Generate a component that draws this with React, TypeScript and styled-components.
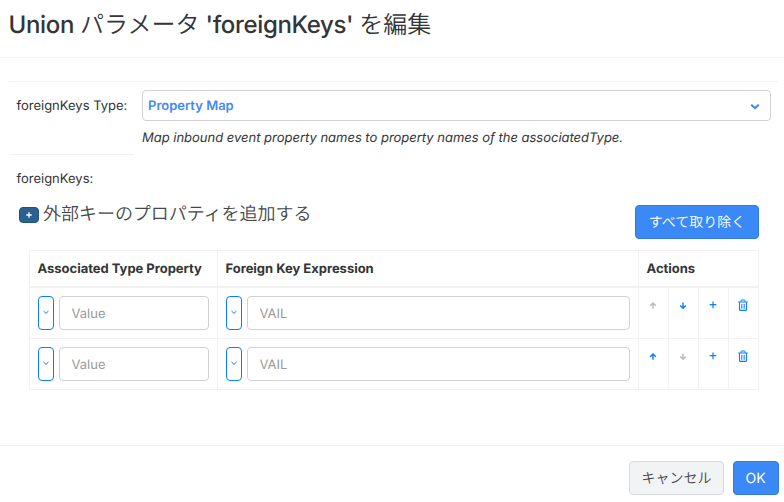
import React from "react";
import styled, { createGlobalStyle } from "styled-components";

const GlobalStyle = createGlobalStyle`
  *, *::before, *::after { box-sizing: border-box; }
  body {
    margin: 0;
    background: #fff;
    color: #333537;
    font-family: Inter, "Noto Sans CJK JP", sans-serif;
    font-size: 13px;
    line-height: 20px;
    text-rendering: geometricPrecision;
  }
  button, input { font: inherit; text-rendering: inherit; }
`;

const LINE = "#f2f2f3";
const BLUE = "#0a7cff";

const Dialog = styled.div`
  display: flex;
  flex-direction: column;
  height: 502px;
  overflow: hidden;
`;

const Header = styled.header`
  height: 58px;
  padding: 7px 9px 0 8.5px;
  border-bottom: 1px solid ${LINE};
`;

const Title = styled.h1`
  margin: 0;
  font-size: 24px;
  line-height: 36px;
  font-weight: 500;
  letter-spacing: -0.33px;
  white-space: nowrap;
`;

const Ja = styled.span<{ $size?: number; $spacing?: number }>`
  font-family: "Noto Sans CJK JP", sans-serif;
  font-weight: 350;
  font-size: ${(p) => (p.$size ? `${p.$size}px` : "inherit")};
  letter-spacing: ${(p) => p.$spacing ?? 0}px;
  line-height: 1;
`;

const Body = styled.main`
  flex: 1;
  padding: 23px 5px 0 9px;
`;

const TypeRow = styled.section`
  display: grid;
  grid-template-columns: 125px 1fr;
  height: 74px;
  border-top: 1px solid ${LINE};
`;

const LabelCell = styled.div`
  padding: 14px 0 0 7.5px;
  white-space: nowrap;
  border-bottom: 1px solid ${LINE};
`;

const FieldCell = styled.div`
  padding: 8px 8px 0;
`;

const Select = styled.button`
  display: flex;
  align-items: center;
  justify-content: space-between;
  width: 629px;
  height: 31px;
  padding: 1px 10px 0 5px;
  border: 1px solid #cfd0da;
  border-radius: 4px;
  background: #fff;
  color: #3f8af5;
  font-weight: 600;
`;

const Help = styled.p`
  margin: 7px 0 0;
  font-style: italic;
  letter-spacing: -0.015px;
  white-space: nowrap;
`;

const KeysLabel = styled.div`
  padding: 14px 0 0 7.5px;
  height: 33px;
`;

const Toolbar = styled.div`
  display: flex;
  justify-content: space-between;
  align-items: flex-start;
  height: 62px;
  padding: 17px 20px 0 10px;
`;

const AddGroup = styled.div`
  display: flex;
  align-items: flex-start;
  gap: 4px;
`;

const AddButton = styled.button`
  display: flex;
  align-items: center;
  justify-content: center;
  width: 20px;
  height: 16px;
  margin-top: 2px;
  padding: 0 1px 0 0;
  border: 1px solid #1f527d;
  border-radius: 4px;
  background: #2b6192;
  color: #fff;
`;

const AddText = styled.div`
  height: 20px;
  margin-top: -1px;
  color: #45474a;
  line-height: 20px;
  white-space: nowrap;
`;

const Button = styled.button<{ $width: number; $primary?: boolean }>`
  display: flex;
  align-items: center;
  justify-content: center;
  width: ${(p) => p.$width}px;
  height: 34px;
  padding: 0 0 1px;
  border: 1px solid ${(p) => (p.$primary ? "#317bdc" : "#d9dadc")};
  border-radius: 4px;
  background: ${(p) => (p.$primary ? "#3b89f6" : "#f2f3f5")};
  color: ${(p) => (p.$primary ? "#fff" : "#45474a")};
  font-size: 14px;
  white-space: nowrap;
`;

const OkButton = styled(Button)`
  padding: 1px 1px 0 0;
`;

const Table = styled.div`
  width: 730px;
  margin-left: 20px;
  border: solid ${LINE};
  border-width: 1px 1px 0 0;
`;

const HeadRow = styled.div`
  display: grid;
  grid-template-columns: 188px 421px 1fr;
  height: 37px;
`;

const HeadCell = styled.div`
  padding: 8px 7.5px 0;
  border-left: 1px solid ${LINE};
  border-bottom: 2px solid ${LINE};
  font-weight: 700;
  letter-spacing: -0.02px;
  white-space: nowrap;
`;

const Row = styled.div`
  display: grid;
  grid-template-columns: 188px 421px repeat(4, 30px);
  height: 51px;
`;

const Cell = styled.div`
  display: flex;
  gap: 5px;
  padding: 8px 8px 0;
  border-left: 1px solid ${LINE};
  border-bottom: 1px solid ${LINE};
`;

const ActionCell = styled(Cell)`
  padding: 11px 0 0 7px;
`;

const PickButton = styled.button`
  display: flex;
  align-items: center;
  justify-content: center;
  flex: none;
  width: 16px;
  height: 34px;
  padding: 0 1px 0 0;
  border: 1px solid ${BLUE};
  border-radius: 4px;
  background: #fff;
  color: ${BLUE};
`;

const Input = styled.input`
  flex: 1;
  min-width: 0;
  height: 34px;
  padding: 2px 11.5px 0;
  border: 1px solid #cfd0d8;
  border-radius: 4px;
  background: #fff;
  &::placeholder { color: #999; opacity: 1; }
`;

const IconButton = styled.button`
  display: flex;
  width: 14px;
  height: 14px;
  padding: 0;
  border: 0;
  background: none;
  color: ${BLUE};
  &:disabled { color: #b9bac1; }
`;

const Footer = styled.footer`
  display: flex;
  justify-content: flex-end;
  gap: 9px;
  height: 57px;
  padding: 15px 5px 0;
  border-top: 1px solid ${LINE};
`;

const Stroke = ({ d, size = 14, width = 1.4 }: { d: string; size?: number; width?: number }) => (
  <svg width={size} height={size} viewBox={`0 0 ${size} ${size}`} fill="none" stroke="currentColor" strokeWidth={width}>
    <path d={d} />
  </svg>
);

const Trash = () => (
  <svg width="14" height="14" viewBox="0 0 14 14" fill="none" stroke="currentColor">
    <path d="M2.2 3H11.8M5 2.8V1.4Q5 1 5.4 1H8.6Q9 1 9 1.4V2.8" />
    <path d="M3.5 3.3V10.4Q3.5 11.4 4.5 11.4H9.5Q10.5 11.4 10.5 10.4V3.3" strokeWidth="1.1" />
    <path d="M5.5 5V9.8M7 5V9.8M8.5 5V9.8" strokeWidth="0.7" />
  </svg>
);

const ARROW_UP = "M7 9.7V4.5M4.2 6.8L7 4L9.8 6.8";
const ARROW_DOWN = "M7 3.5V8.7M4.2 6.4L7 9.2L9.8 6.4";
const PLUS = "M7 2.5V9.2M3.7 5.7H10.3";
const SMALL_CHEVRON = "M2.5 3L5 5.4L7.5 3";

const KeyRow = ({ first }: { first: boolean }) => (
  <Row>
    <Cell>
      <PickButton aria-label="Choose value"><Stroke d={SMALL_CHEVRON} size={10} width={1} /></PickButton>
      <Input placeholder="Value" />
    </Cell>
    <Cell>
      <PickButton aria-label="Choose expression"><Stroke d={SMALL_CHEVRON} size={10} width={1} /></PickButton>
      <Input placeholder="VAIL" />
    </Cell>
    <ActionCell><IconButton aria-label="Move up" disabled={first}><Stroke d={ARROW_UP} /></IconButton></ActionCell>
    <ActionCell><IconButton aria-label="Move down" disabled={!first}><Stroke d={ARROW_DOWN} /></IconButton></ActionCell>
    <ActionCell><IconButton aria-label="Add"><Stroke d={PLUS} width={1.2} /></IconButton></ActionCell>
    <ActionCell><IconButton aria-label="Delete"><Trash /></IconButton></ActionCell>
  </Row>
);

export default function App() {
  return (
    <>
      <GlobalStyle />
      <Dialog lang="ja">
        <Header>
          <Title>Union <Ja>パラメータ</Ja> 'foreignKeys' <Ja>を編集</Ja></Title>
        </Header>
        <Body>
          <TypeRow>
            <LabelCell>foreignKeys Type:</LabelCell>
            <FieldCell>
              <Select>
                Property Map
                <Stroke d="M1.2 3.7L5 7L8.8 3.7" size={10} width={2.1} />
              </Select>
              <Help>Map inbound event property names to property names of the associatedType.</Help>
            </FieldCell>
          </TypeRow>
          <KeysLabel>foreignKeys:</KeysLabel>
          <Toolbar>
            <AddGroup>
              <AddButton aria-label="Add property"><Stroke d="M5 2.3V7.7M2.3 5H7.7" size={10} width={1.3} /></AddButton>
              <AddText><Ja $size={18} $spacing={-0.03}>外部キーのプロパティを追加する</Ja></AddText>
            </AddGroup>
            <Button $width={124} $primary><Ja>すべて取り除く</Ja></Button>
          </Toolbar>
          <Table>
            <HeadRow>
              <HeadCell>Associated Type Property</HeadCell>
              <HeadCell>Foreign Key Expression</HeadCell>
              <HeadCell>Actions</HeadCell>
            </HeadRow>
            <KeyRow first />
            <KeyRow first={false} />
          </Table>
        </Body>
        <Footer>
          <Button $width={95}><Ja>キャンセル</Ja></Button>
          <OkButton $width={46} $primary>OK</OkButton>
        </Footer>
      </Dialog>
    </>
  );
}
